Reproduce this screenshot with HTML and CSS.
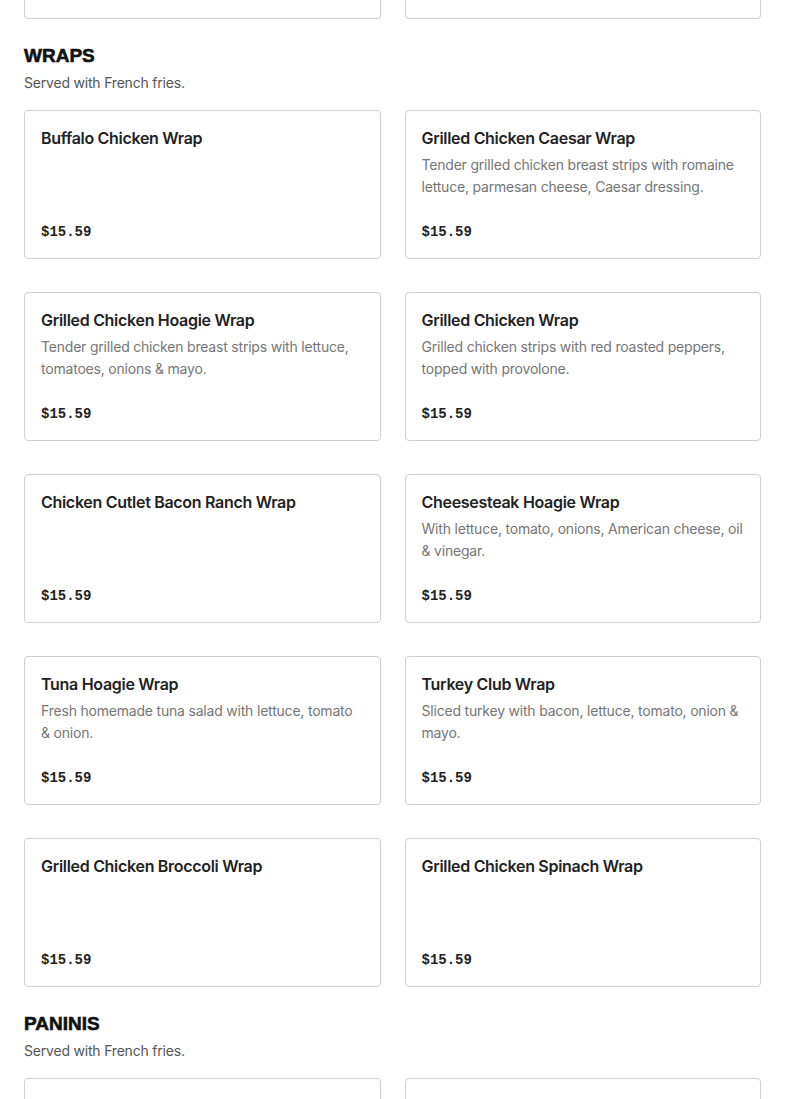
FILE: index.html
```html
<!DOCTYPE html>
<html lang="en">
<head>
    <meta charset="UTF-8">
    <meta name="viewport" content="width=device-width, initial-scale=1.0">
    <title>Menu - Wraps</title>
    <link rel="stylesheet" href="styles.css">
</head>
<body>
    <div class="menu">
        <!-- end of the previous section, scrolled off the top -->
        <div class="item-grid tail">
            <div class="item-card"></div>
            <div class="item-card"></div>
        </div>

        <section class="menu-section">
            <h2>WRAPS</h2>
            <p class="section-note">Served with French fries.</p>
            <div class="item-grid">
                <div class="item-card">
                    <h3>Buffalo Chicken Wrap</h3>
                    <p class="price">$15.59</p>
                </div>
                <div class="item-card">
                    <h3>Grilled Chicken Caesar Wrap</h3>
                    <p class="desc">Tender grilled chicken breast strips with romaine lettuce, parmesan cheese, Caesar dressing.</p>
                    <p class="price">$15.59</p>
                </div>
                <div class="item-card">
                    <h3>Grilled Chicken Hoagie Wrap</h3>
                    <p class="desc">Tender grilled chicken breast strips with lettuce, tomatoes, onions &amp; mayo.</p>
                    <p class="price">$15.59</p>
                </div>
                <div class="item-card">
                    <h3>Grilled Chicken Wrap</h3>
                    <p class="desc">Grilled chicken strips with red roasted peppers, topped with provolone.</p>
                    <p class="price">$15.59</p>
                </div>
                <div class="item-card">
                    <h3>Chicken Cutlet Bacon Ranch Wrap</h3>
                    <p class="price">$15.59</p>
                </div>
                <div class="item-card">
                    <h3>Cheesesteak Hoagie Wrap</h3>
                    <p class="desc">With lettuce, tomato, onions, American cheese, oil &amp; vinegar.</p>
                    <p class="price">$15.59</p>
                </div>
                <div class="item-card">
                    <h3>Tuna Hoagie Wrap</h3>
                    <p class="desc">Fresh homemade tuna salad with lettuce, tomato &amp; onion.</p>
                    <p class="price">$15.59</p>
                </div>
                <div class="item-card">
                    <h3>Turkey Club Wrap</h3>
                    <p class="desc">Sliced turkey with bacon, lettuce, tomato, onion &amp; mayo.</p>
                    <p class="price">$15.59</p>
                </div>
                <div class="item-card">
                    <h3>Grilled Chicken Broccoli Wrap</h3>
                    <p class="price">$15.59</p>
                </div>
                <div class="item-card">
                    <h3>Grilled Chicken Spinach Wrap</h3>
                    <p class="price">$15.59</p>
                </div>
            </div>
        </section>

        <section class="menu-section">
            <h2>PANINIS</h2>
            <p class="section-note">Served with French fries.</p>
            <div class="item-grid loading">
                <div class="item-card">
                    <h3>Grilled Chicken Pesto Panini</h3>
                    <p class="price">$15.59</p>
                </div>
                <div class="item-card">
                    <h3>Turkey Club Panini</h3>
                    <p class="price">$15.59</p>
                </div>
            </div>
        </section>
    </div>
</body>
</html>
```

FILE: styles.css
```css
body {
    margin: 0;
    font-family: Inter, "Liberation Sans", Arial, sans-serif;
    color: #222;
    background: #fff;
}
.menu {
    padding: 0 24px;
}
.menu-section {
    margin-top: 25px;
}
.menu-section h2 {
    margin: 0;
    font-family: "Liberation Sans", Arial, sans-serif;
    font-size: 19px;
    font-weight: bold;
    line-height: 24px;
    color: #111;
    -webkit-text-stroke: 0.6px #111;
}
.section-note {
    margin: 5px 0 0;
    font-size: 14px;
    line-height: 20px;
    letter-spacing: -0.2px;
    color: #555;
}
.item-grid {
    display: grid;
    grid-template-columns: 1fr 1fr;
    column-gap: 24px;
    row-gap: 33px;
    margin-top: 17px;
}
.item-card {
    display: flex;
    flex-direction: column;
    height: 149px;
    box-sizing: border-box;
    padding: 15px 16px 16px;
    border: 1px solid #cfcfcf;
    border-radius: 4px;
}
.item-card h3 {
    margin: 0;
    font-size: 16px;
    font-weight: 600;
    line-height: 24px;
    letter-spacing: -0.3px;
    color: #222;
}
.desc {
    margin: 4px 0 0;
    font-size: 14px;
    line-height: 22px;
    letter-spacing: -0.2px;
    color: #767676;
}
.price {
    margin: auto 0 0;
    font-family: "Liberation Mono", "Courier New", monospace;
    font-size: 14px;
    font-weight: bold;
    line-height: 20px;
    color: #222;
}
.tail {
    margin-top: 0;
}
.tail .item-card {
    height: 19px;
    padding: 0;
    border-top: none;
    border-radius: 0 0 4px 4px;
}
.loading .item-card h3,
.loading .price {
    color: #e4e4e4;
}
```
